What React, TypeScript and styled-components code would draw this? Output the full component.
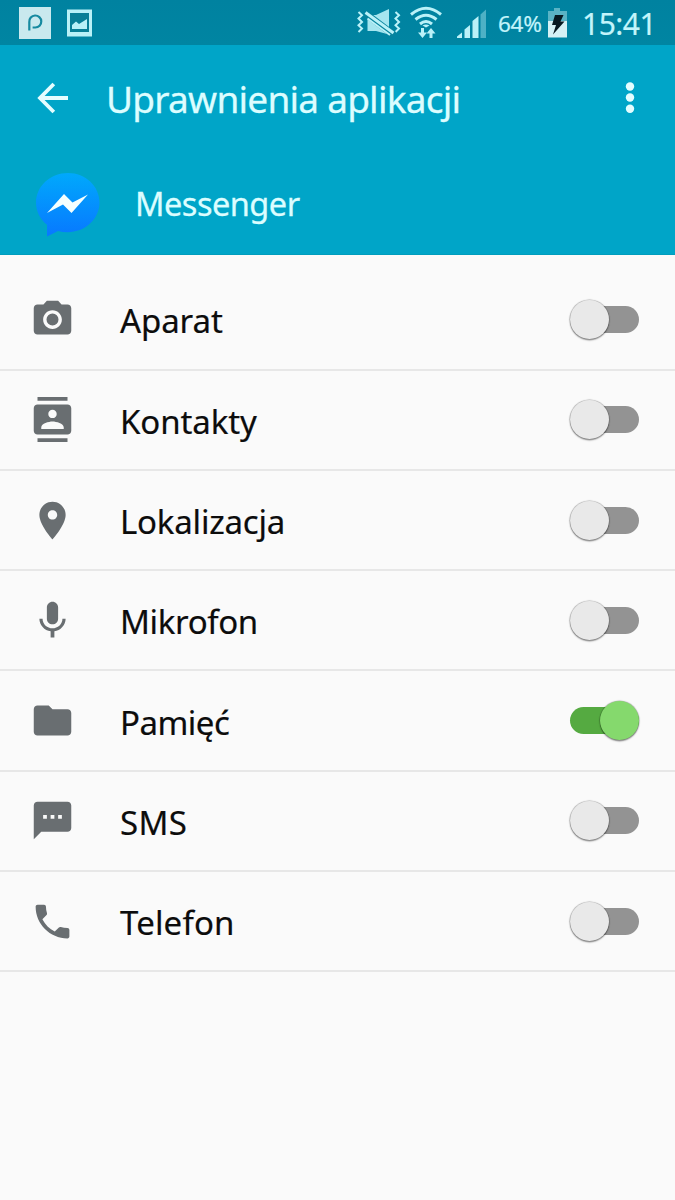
import React from "react";
import styled, { createGlobalStyle } from "styled-components";

const GlobalStyle = createGlobalStyle`
  * { box-sizing: border-box; }
  html, body { margin: 0; padding: 0; background: #fafafa; }
`;

const Screen = styled.main`
  width: 675px;
  height: 1200px;
  overflow: hidden;
  display: flex;
  flex-direction: column;
  background: #fafafa;
  font-family: "Noto Sans", sans-serif;
`;

const StatusBar = styled.div`
  height: 45px;
  flex: none;
  display: flex;
  align-items: flex-start;
  justify-content: space-between;
  padding-right: 20px;
  background: linear-gradient(#0082a0, #0085a2);
  color: #c3f4fb;
`;

const StatusGroup = styled.div`
  display: flex;
  height: 45px;
`;

const StatusText = styled.span<{ $size: number; $width: number; $left: number; $track: number }>`
  width: ${(p) => p.$width}px;
  margin-left: ${(p) => p.$left}px;
  padding-top: 1px;
  font-size: ${(p) => p.$size}px;
  letter-spacing: ${(p) => p.$track}px;
  line-height: 46px;
  white-space: nowrap;
  -webkit-text-stroke: 0.2px currentColor;
`;

const Glyph = styled.svg`
  display: block;
  flex: none;
`;

const Battery = styled(Glyph)`
  margin-left: 5px;
`;

const Header = styled.header`
  height: 210px;
  flex: none;
  background: #00a5c8;
  border-bottom: 1px solid #009dbd;
  color: #dcfdff;
`;

const TitleRow = styled.div`
  height: 106px;
  display: flex;
  align-items: center;
  padding: 0 37px;
`;

const Title = styled.h1`
  flex: 1;
  margin: 2px 0 0 37px;
  font-size: 37px;
  font-weight: 400;
  line-height: 50px;
  letter-spacing: -0.76px;
  white-space: nowrap;
  -webkit-text-stroke: 0.3px currentColor;
`;

const AppRow = styled.div`
  height: 105px;
  display: flex;
  align-items: center;
  padding-left: 34px;
`;

const AppName = styled.h2`
  margin: 1px 0 0 35px;
  font-size: 32.5px;
  font-weight: 400;
  line-height: 44px;
  letter-spacing: -0.5px;
  -webkit-text-stroke: 0.3px currentColor;
`;

const List = styled.ul`
  margin: 0;
  padding: 15.3px 0 0;
  list-style: none;
`;

const Row = styled.li`
  height: 100.3px;
  display: flex;
  align-items: center;
  padding: 0 36px 0 30px;
  border-bottom: 2px solid #e7e7e7;
`;

const Label = styled.span<{ $track: number }>`
  flex: 1;
  margin: 4px 0 0 45px;
  font-size: 33px;
  line-height: 44px;
  color: #0c0c0c;
  letter-spacing: ${(p) => p.$track}px;
  -webkit-text-stroke: 0.2px currentColor;
`;

const Track = styled.span<{ $on: boolean }>`
  width: 69px;
  height: 27px;
  display: flex;
  align-items: center;
  justify-content: ${(p) => (p.$on ? "flex-end" : "flex-start")};
  border-radius: 14px;
  background: ${(p) => (p.$on ? "#55aa41" : "#939393")};
`;

const Knob = styled.span<{ $on: boolean }>`
  width: 39px;
  height: 39px;
  flex: none;
  border-radius: 50%;
  background: ${(p) => (p.$on ? "#85d96d" : "#e9e9e9")};
  box-shadow: 0 0 1px 0.500px rgba(0, 0, 0, 0.3), 0 1.5px 1.5px rgba(0, 0, 0, 0.35);
`;

const icons = {
  camera:
    "M9 2L7.17 4H4c-1.1 0-2 .9-2 2v12c0 1.1.9 2 2 2h16c1.1 0 2-.9 2-2V6c0-1.1-.9-2-2-2h-3.17L15 2H9zm3 15c-2.76 0-5-2.24-5-5s2.24-5 5-5 5 2.24 5 5-2.24 5-5 5zM12 8.8a3.2 3.2 0 1 0 0 6.4 3.2 3.2 0 1 0 0-6.4z",
  contacts:
    "M20 0H4v2h16V0zM4 24h16v-2H4v2zM20 4H4c-1.1 0-2 .9-2 2v12c0 1.1.9 2 2 2h16c1.1 0 2-.9 2-2V6c0-1.1-.9-2-2-2zm-8 2.75c1.24 0 2.25 1.01 2.25 2.25s-1.01 2.25-2.25 2.25S9.75 10.24 9.75 9 10.76 6.75 12 6.75zM18 17H6v-.8c0-2 4-3.100 6-3.100s6 1.100 6 3.100V17z",
  place:
    "M12 2C8.13 2 5 5.13 5 9c0 5.25 7 13 7 13s7-7.75 7-13c0-3.87-3.13-7-7-7zm0 9.5c-1.38 0-2.5-1.12-2.5-2.5s1.12-2.5 2.5-2.5 2.5 1.12 2.5 2.5-1.12 2.5-2.5 2.5z",
  mic: "M12 14c1.66 0 2.99-1.34 2.99-3L15 5c0-1.66-1.34-3-3-3S9 3.34 9 5v6c0 1.66 1.34 3 3 3zm5.3-3c0 3-2.54 5.1-5.3 5.1S6.7 14 6.7 11H5c0 3.41 2.72 6.23 6 6.72V21h2v-3.28c3.28-.48 6-3.3 6-6.72h-1.7z",
  folder:
    "M10 4H4c-1.1 0-1.99.9-1.99 2L2 18c0 1.1.9 2 2 2h16c1.1 0 2-.9 2-2V8c0-1.1-.9-2-2-2h-8l-2-2z",
  sms: "M20 2H4c-1.1 0-1.99.9-1.99 2L2 22l4-4h14c1.1 0 2-.9 2-2V4c0-1.1-.9-2-2-2zM9 11H7V9h2v2zm4 0h-2V9h2v2zm4 0h-2V9h2v2z",
  phone:
    "M6.62 10.79c1.44 2.83 3.76 5.14 6.59 6.59l2.2-2.2c.27-.27.67-.36 1.02-.24 1.12.37 2.33.57 3.57.57.55 0 1 .45 1 1V20c0 .55-.45 1-1 1-9.39 0-17-7.61-17-17 0-.55.45-1 1-1h3.5c.55 0 1 .45 1 1 0 1.25.2 2.45.57 3.57.11.35.03.74-.25 1.02l-2.2 2.2z",
};

const permissions: { icon: keyof typeof icons; label: string; on: boolean; track: number }[] = [
  { icon: "camera", label: "Aparat", on: false, track: -0.1 },
  { icon: "contacts", label: "Kontakty", on: false, track: -0.1 },
  { icon: "place", label: "Lokalizacja", on: false, track: -0.2 },
  { icon: "mic", label: "Mikrofon", on: false, track: -0.35 },
  { icon: "folder", label: "Pamięć", on: true, track: -0.5 },
  { icon: "sms", label: "SMS", on: false, track: 0.4 },
  { icon: "phone", label: "Telefon", on: false, track: 0.15 },
];

const NotificationIcons = () => (
  <Glyph width="110" height="45" viewBox="0 0 110 45">
    <rect x="19" y="7" width="32" height="32" fill="#c9e9ee" />
    <path d="M29.3 30.5V22a6 6 0 1 1 6 5.500h-2.700" fill="none" stroke="#168aa0" strokeWidth="2.200" />
    <rect x="67" y="9.500" width="25" height="27" fill="#b9f1f7" />
    <rect x="70" y="13" width="19" height="19" fill="#087f96" />
    <path d="M72 29v-4l4-3.500 3 2.500 8-5V29z" fill="#b9f1f7" />
  </Glyph>
);

const SignalIcons = () => (
  <Glyph width="133" height="45" viewBox="355 0 133 45" fill="none" stroke="#baf1f8">
    <path d="M358.500 12l3.500 3.300-3.500 3.300 3.500 3.300-3.500 3.300 3.500 3.300-3.500 3.500" strokeWidth="2" />
    <path d="M395.500 12l3.500 3.300-3.500 3.300 3.500 3.300-3.500 3.300 3.500 3.300-3.500 3.500" strokeWidth="2" />
    <path d="M367.500 15h8.500l13-6v25.500L376 31h-8.500z" fill="#a5e5ef" stroke="none" />
    <path d="M365.500 13.500L394 35" stroke="#07839d" strokeWidth="7" />
    <path d="M365.500 12.500L393.500 33" strokeWidth="3" />
    <path d="M367.500 18.500L390 35" strokeWidth="2" />
    <path d="M411 14.500q15-12.500 30 0M415.500 19.500q10.500-8.500 21 0M420 24q6-5 12 0" strokeWidth="3" />
    <path d="M422.500 25.500q3.500-2 7 0l-3.500 2z" fill="#baf1f8" stroke="none" />
    <path d="M422.500 28v6M431 38v-6" strokeWidth="3" />
    <path d="M418 32.500h9l-4.500 5.500zM426.500 33.500h9L431 28z" fill="#baf1f8" stroke="none" />
    <g fill="#baf1f8" stroke="none">
      <path d="M457 38v-1.500l5-4V38z" />
      <path d="M464.500 38v-8.500l5.500-4.500V38z" />
      <path d="M472.500 38V21l6-5v22z" />
      <path d="M480.500 38V14.500l5.500-5V38z" opacity=".42" />
    </g>
  </Glyph>
);

const BatteryIcon = () => (
  <Battery width="22" height="45" viewBox="0 0 22 45">
    <path d="M7 8h6v3h7v10H1V11h6z" fill="#5ab3c5" />
    <path d="M1 21h19v16.500H1z" fill="#d5f1f5" />
    <path d="M8 15h8.500l-3 6.500h4L6 34.500 9 25H5z" fill="#061820" />
  </Battery>
);

const BackArrow = () => (
  <Glyph width="32" height="32" viewBox="0 0 32 32" fill="none" stroke="#e4fdff" strokeWidth="3.800">
    <path d="M16.800 2L3 16l13.800 14M3.500 16H31" />
  </Glyph>
);

const MoreDots = () => (
  <Glyph width="16" height="36" viewBox="0 0 16 36" fill="#e4fdff">
    <circle cx="8" cy="6.500" r="4.200" />
    <circle cx="8" cy="17.500" r="4.200" />
    <circle cx="8" cy="28.800" r="4.200" />
  </Glyph>
);

const MessengerLogo = () => (
  <Glyph width="66" height="68" viewBox="0 0 66 68">
    <defs>
      <linearGradient id="bubble" x1="0" y1="0" x2="0" y2="1">
        <stop offset="0" stopColor="#00a9fc" />
        <stop offset="1" stopColor="#0878ff" />
      </linearGradient>
    </defs>
    <path
      d="M34 3C16.500 3 2 16 2 32.500c0 9 4.200 17 11 22.300V66.500l11-5.500c3 .8 6.200 1.200 9.500 1.200 17.500 0 32-13.200 32-29.700S51.500 3 34 3z"
      fill="url(#bubble)"
    />
    <path d="M13 43L30 24l8.500 8.500L54 24.500 37.500 43 29 34.500z" fill="#f4ffff" />
  </Glyph>
);

export default function App() {
  return (
    <Screen>
      <GlobalStyle />
      <StatusBar>
        <NotificationIcons />
        <StatusGroup>
          <SignalIcons />
          <StatusText $size={22.5} $width={44} $left={10} $track={-0.3}>64%</StatusText>
          <BatteryIcon />
          <StatusText $size={30} $width={73} $left={13} $track={-0.5}>15:41</StatusText>
        </StatusGroup>
      </StatusBar>
      <Header>
        <TitleRow>
          <BackArrow />
          <Title>Uprawnienia aplikacji</Title>
          <MoreDots />
        </TitleRow>
        <AppRow>
          <MessengerLogo />
          <AppName>Messenger</AppName>
        </AppRow>
      </Header>
      <List>
        {permissions.map((p) => (
          <Row key={p.label}>
            <Glyph width="45" height="45" viewBox="0 0 24 24" fill="#696e71" fillRule="evenodd">
              <path d={icons[p.icon]} />
            </Glyph>
            <Label $track={p.track}>{p.label}</Label>
            <Track $on={p.on} role="switch" aria-checked={p.on}>
              <Knob $on={p.on} />
            </Track>
          </Row>
        ))}
      </List>
    </Screen>
  );
}
